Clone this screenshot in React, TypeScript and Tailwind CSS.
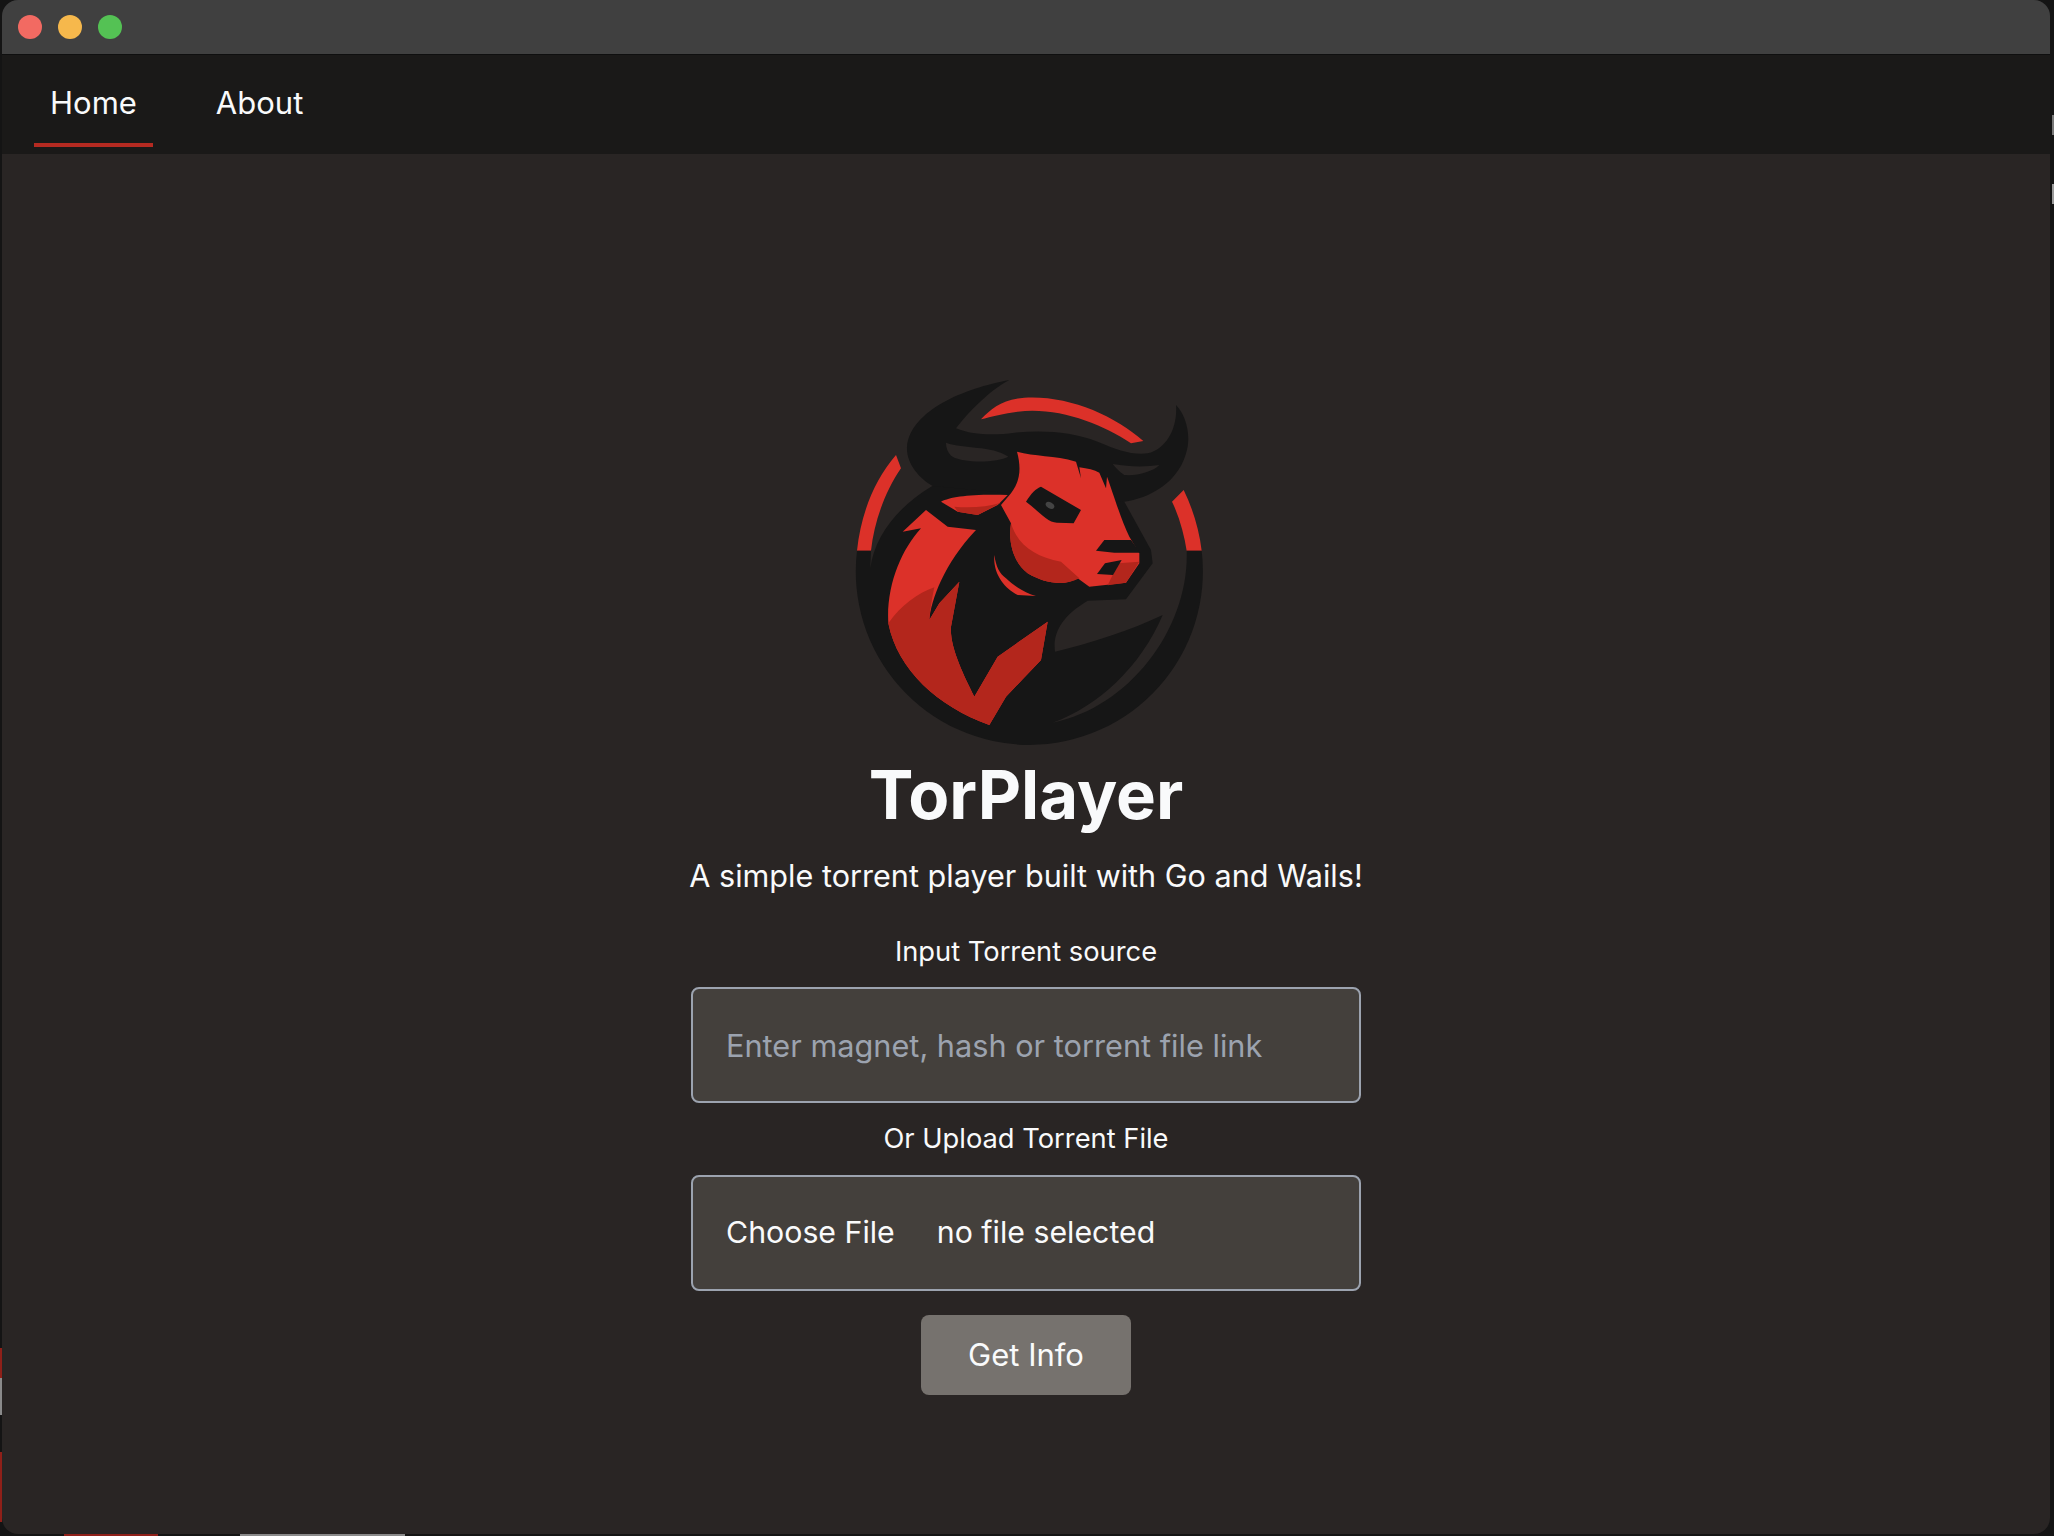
const RED = "#dc3129";
const DARK_RED = "#b3261c";
const INK = "#161616";
const BG = "#292524";

function BullLogo() {
  return (
    <svg viewBox="0 0 1140 1200" className="w-[380px] h-[400px] shrink-0 mr-[10px]" aria-label="TorPlayer logo">
      {/* ring, red top */}
      <path fill={RED} d="M450 178C480 145 515 118 580 113C710 105 850 165 937 243L900 250C810 190 680 140 560 155C520 160 480 170 450 178Z" />
      <path fill={RED} d="M195 285L210 325C165 390 130 480 120 572L78 572C90 460 130 360 195 285Z" />
      <path fill={RED} d="M1058 390C1085 445 1105 510 1112 572L1067 572C1060 525 1045 470 1023 425Z" />
      {/* dark silhouette */}
      <path
        fill={INK}
        d="M78 572A520.7 520.7 0 1 0 1112 572L1067 572C1075 800 900 1040 665 1088C800 1040 930 920 995 765C900 810 780 850 672 875C665 820 690 770 770 722L885 718L965 610L960 570L880 425L560 250L300 380C200 440 130 530 118 625L120 572Z"
      />
      {/* horns */}
      <path
        fill={INK}
        d="M535 60C400 85 240 150 228 260C225 310 265 355 305 378L540 400L880 425C950 415 1050 370 1070 260C1078 210 1060 160 1035 135C1040 200 1010 265 950 280C900 285 860 270 800 245C720 215 640 210 550 218C500 225 430 228 375 205C410 160 470 95 535 60Z"
      />
      <path fill={BG} d="M345 248C400 268 480 255 532 290C500 308 400 310 365 290C350 280 345 262 345 248Z" />
      <path fill={BG} d="M845 312C900 322 950 320 985 315C965 335 920 348 880 345C865 335 855 325 845 312Z" />
      {/* head */}
      <path
        fill={RED}
        d="M558 275C610 290 670 285 735 305L750 355L745 322C770 325 790 330 805 338L825 385L828 350C845 395 870 480 895 530L925 580L925 610L885 668L775 680L740 655C700 680 640 670 590 640C550 610 530 550 540 490L510 435L540 400C570 360 570 320 558 275Z"
      />
      <path
        fill={DARK_RED}
        d="M540 490C560 555 610 590 690 605L745 655C700 680 640 670 590 640C550 610 530 550 540 490Z"
      />
      <path fill={DARK_RED} d="M925 605L885 668L830 676L862 610Z" />
      <path fill={INK} d="M585 425C600 400 615 385 630 380L750 450L728 490L680 488C650 490 620 450 585 425Z" />
      <ellipse cx="657" cy="436" rx="14" ry="9" fill="#444444" transform="rotate(30 657 436)" />
      <path fill={INK} d="M795 572L820 540L900 540L928 578L850 578Z" />
      <path fill={INK} d="M798 642L822 610L872 600L846 645Z" />
      {/* ear */}
      <path fill={RED} d="M330 425C360 410 420 402 530 405L500 435L440 465L380 455Z" />
      <path fill={DARK_RED} d="M370 440C420 445 470 440 510 428L440 465L380 455Z" />
      {/* collar */}
      <path fill={RED} d="M490 585C495 620 505 640 525 655C550 680 585 700 615 708L560 705C520 685 485 640 490 585Z" />
      {/* body */}
      <path
        fill={RED}
        d="M285 450L215 515L270 505C210 570 165 680 172 790C200 930 320 1040 475 1095L525 1010L630 900L650 785L500 890L430 1010C400 950 355 860 360 800L385 665L325 730L295 780C300 720 340 610 435 510L350 500Z"
      />
      <path
        fill={DARK_RED}
        d="M172 790C210 735 260 700 310 682C303 715 297 750 295 780L325 730L385 665L360 800C355 860 400 950 430 1010L500 890L650 785L630 900L525 1010L475 1095C320 1040 200 930 172 790Z"
      />
    </svg>
  );
}

export default function App() {
  return (
    <div className="relative w-[2054px] h-[1536px] bg-[#141414] pl-[2px] pr-[4px] pb-[2px] font-['Inter',sans-serif] text-[#f9fafb]">
      {/* slivers of whatever sits behind the window */}
      <div className="absolute left-0 top-[1348px] w-[2px] h-[30px] bg-[#8f2019]" />
      <div className="absolute left-0 top-[1378px] w-[2px] h-[37px] bg-[#8a8a8a]" />
      <div className="absolute left-0 top-[1452px] w-[2px] h-[70px] bg-[#8f2019]" />
      <div className="absolute left-[64px] bottom-0 w-[94px] h-[2px] bg-[#8f2019]" />
      <div className="absolute left-[240px] bottom-0 w-[165px] h-[2px] bg-[#8a8a8a]" />
      <div className="absolute right-0 top-[115px] w-[2px] h-[20px] bg-[#777777]" />
      <div className="absolute right-0 top-[184px] w-[2px] h-[20px] bg-[#999999]" />

      <div className="relative h-full flex flex-col rounded-[16px] overflow-hidden">
        {/* title bar */}
        <div className="h-[55px] shrink-0 flex items-center gap-[16px] pl-[16px] bg-[#404040] border-b border-[#0f0f0f]">
          <span className="w-[24px] h-[24px] rounded-full bg-[#f26a62]" />
          <span className="w-[24px] h-[24px] rounded-full bg-[#f6b84c]" />
          <span className="w-[24px] h-[24px] rounded-full bg-[#54c254]" />
        </div>

        {/* nav */}
        <nav className="h-[99px] shrink-0 flex bg-[#1a1918] pl-[32px] pt-[8px] text-[31px]">
          <a className="h-[84px] px-[16px] flex items-center border-b-4 border-[#b52a21]">Home</a>
          <a className="h-[84px] ml-[47px] px-[16px] flex items-center border-b-4 border-transparent">About</a>
        </nav>

        {/* main */}
        <main className="flex-1 flex flex-col items-center bg-[#292524] pt-[206px]">
          <BullLogo />
          <h1 className="text-[67px] leading-[88px] font-bold -mt-[9px]">TorPlayer</h1>
          <p className="text-[30.6px] leading-[40px] mt-[17px]">A simple torrent player built with Go and Wails!</p>
          <label className="text-[27.3px] leading-[36px] mt-[38px]">Input Torrent source</label>
          <input
            placeholder="Enter magnet, hash or torrent file link"
            className="w-[670px] h-[116px] mt-[17px] px-[33px] text-[30.7px] bg-[#44403c] border-2 border-[#9ca3af] rounded-[8px] placeholder:text-[#9ca3af] outline-none"
          />
          <label className="text-[27.3px] leading-[36px] mt-[18px]">Or Upload Torrent File</label>
          <div className="w-[670px] h-[116px] mt-[18px] px-[33px] flex items-center text-[30.3px] bg-[#44403c] border-2 border-[#9ca3af] rounded-[8px]">
            <span>Choose File</span>
            <span className="ml-[42px]">no file selected</span>
          </div>
          <button className="w-[210px] h-[80px] mt-[24px] text-[31px] bg-[#76726e] rounded-[8px]">Get Info</button>
        </main>
      </div>
    </div>
  );
}
